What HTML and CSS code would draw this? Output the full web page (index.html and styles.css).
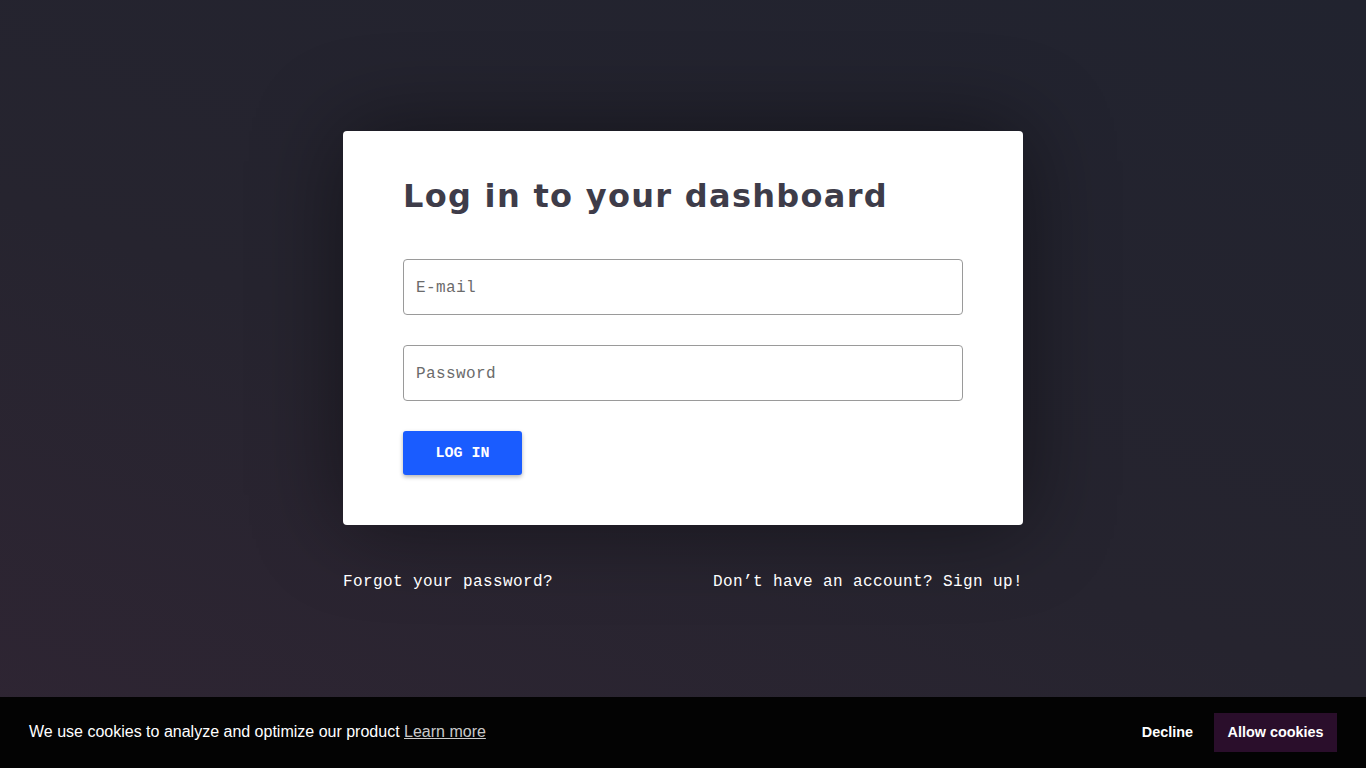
FILE: index.html
```html
<!DOCTYPE html>
<html lang="en">
<head>
    <meta charset="UTF-8">
    <meta name="viewport" content="width=device-width, initial-scale=1.0">
    <title>Log in</title>
    <link rel="stylesheet" href="styles.css">
</head>
<body>
    <div class="page">
        <div class="login-card">
            <h1>Log in to your dashboard</h1>
            <form class="login-form">
                <input type="email" placeholder="E-mail">
                <input type="password" placeholder="Password">
                <button type="submit">LOG IN</button>
            </form>
        </div>
        <div class="login-links">
            <a href="#">Forgot your password?</a>
            <a href="#">Don’t have an account? Sign up!</a>
        </div>
    </div>

    <div class="cookie-bar">
        <span class="cookie-text">We use cookies to analyze and optimize our product <a href="#">Learn more</a></span>
        <div class="cookie-actions">
            <button class="cookie-decline">Decline</button>
            <button class="cookie-allow">Allow cookies</button>
        </div>
    </div>
</body>
</html>
```

FILE: styles.css
```css
html, body {
    height: 100%;
    margin: 0;
    padding: 0;
}
body {
    font-family: 'Liberation Mono', monospace;
    background: linear-gradient(20deg, #2f2533 0%, #26242f 45%, #21232f 100%);
    min-height: 100vh;
    overflow: hidden;
}
.page {
    display: flex;
    flex-direction: column;
    align-items: center;
    padding-top: 131px;
}
.login-card {
    width: 680px;
    box-sizing: border-box;
    background: #ffffff;
    border-radius: 4px;
    padding: 45px 60px 50px;
    box-shadow: 0 0 90px rgba(0, 0, 0, 0.45);
}
h1 {
    margin: 0 0 43px;
    font-family: 'DejaVu Sans', sans-serif;
    font-weight: 700;
    font-size: 32px;
    line-height: 40px;
    color: #3e3c49;
    letter-spacing: 1.3px;
    white-space: nowrap;
}
.login-form {
    display: flex;
    flex-direction: column;
    align-items: flex-start;
    gap: 30px;
}
.login-form input {
    width: 100%;
    height: 56px;
    box-sizing: border-box;
    padding: 1px 12px 0;
    border: 1px solid #9a9a9a;
    border-radius: 4px;
    font-family: 'Liberation Mono', monospace;
    font-size: 16px;
    letter-spacing: 0.4px;
    color: #333;
    outline: none;
}
.login-form input::placeholder {
    color: #6b6b6b;
}
.login-form button {
    width: 119px;
    height: 44px;
    padding-top: 2px;
    background: #1a5cff;
    color: #ffffff;
    border: none;
    border-radius: 3px;
    font-family: 'Liberation Mono', monospace;
    font-weight: 700;
    font-size: 15px;
    cursor: pointer;
    box-shadow: 0 2px 4px rgba(0, 0, 0, 0.3);
}
.login-links {
    width: 680px;
    display: flex;
    justify-content: space-between;
    margin-top: 47px;
    line-height: 20px;
}
.login-links a {
    color: #ffffff;
    text-decoration: none;
    font-size: 16px;
    letter-spacing: 0.4px;
}
/* Cookie banner */
.cookie-bar {
    position: fixed;
    left: 0;
    right: 0;
    bottom: 0;
    height: 71px;
    background: #030303;
    display: flex;
    align-items: center;
    justify-content: space-between;
    padding: 0 29px;
    box-sizing: border-box;
    font-family: 'Liberation Sans', Arial, sans-serif;
}
.cookie-text {
    color: #ffffff;
    font-size: 16px;
    margin-top: -1px;
}
.cookie-text a {
    color: rgba(255, 255, 255, 0.8);
}
.cookie-actions {
    display: flex;
    align-items: center;
}
.cookie-actions button {
    font-family: 'Liberation Sans', Arial, sans-serif;
    font-weight: 700;
    font-size: 14.4px;
    color: #ffffff;
    border: none;
    background: transparent;
    height: 39px;
    padding: 0 21px 2px;
    white-space: nowrap;
    cursor: pointer;
}
.cookie-actions .cookie-allow {
    background: #2a0e2b;
    width: 123px;
    padding: 0 0 2px;
}
```
